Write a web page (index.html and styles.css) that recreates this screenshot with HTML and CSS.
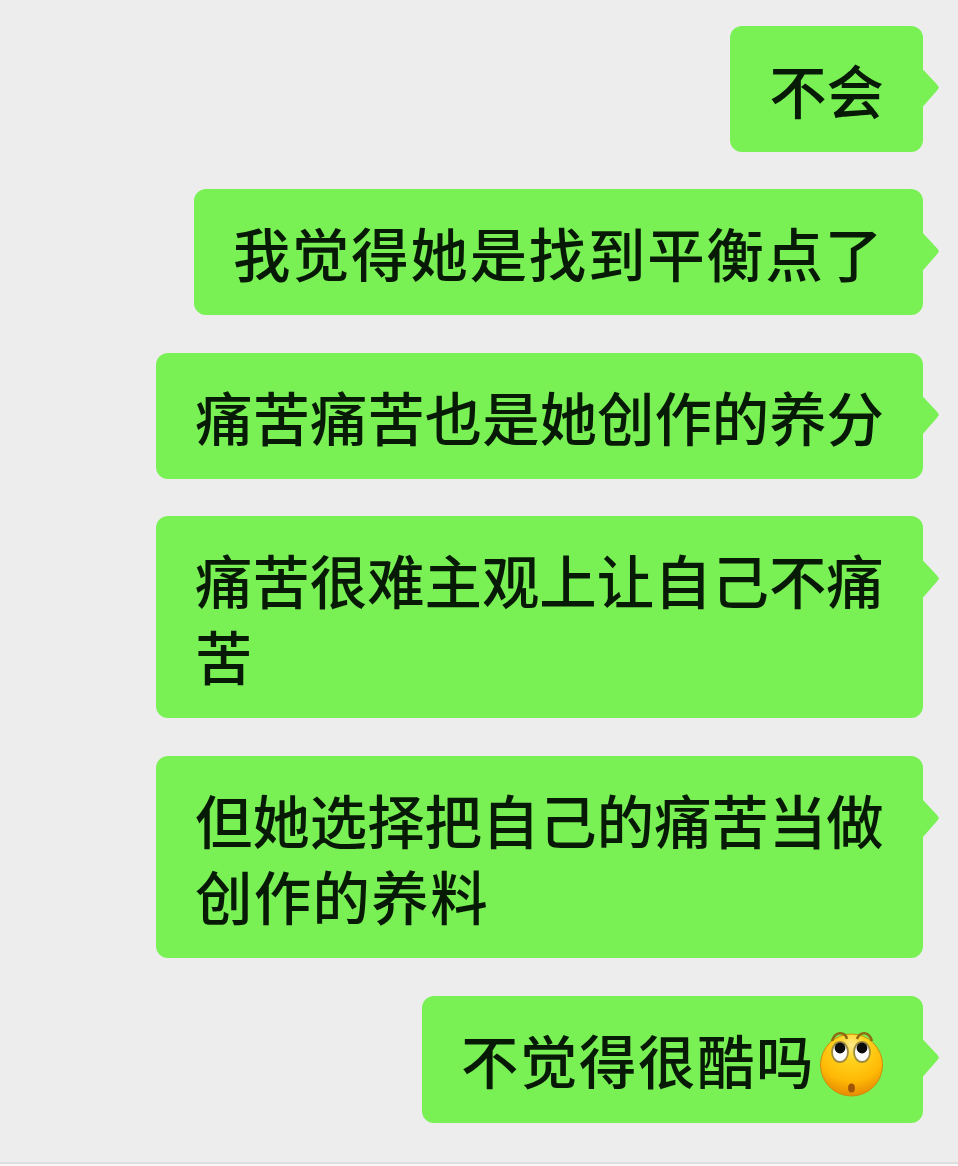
FILE: index.html
```html
<!DOCTYPE html>
<html lang="zh-CN">
<head>
    <meta charset="UTF-8">
    <title>聊天记录</title>
    <link rel="stylesheet" href="styles.css">
</head>
<body>
    <div class="chat">
        <div class="bubble">不会</div>
        <div class="bubble wide-text">我觉得她是找到平衡点了</div>
        <div class="bubble">痛苦痛苦也是她创作的养分</div>
        <div class="bubble">痛苦很难主观上让自己不痛苦</div>
        <div class="bubble">但她选择把自己的痛苦当做<span class="loose">创作的养料</span></div>
        <div class="bubble emoji-row">不觉得很酷吗<svg class="emoji" viewBox="0 0 64 68" aria-hidden="true">
            <defs>
                <radialGradient id="face" cx="50%" cy="18%" r="80%">
                    <stop offset="0" stop-color="#ffe98c"/>
                    <stop offset="0.28" stop-color="#ffd41e"/>
                    <stop offset="0.72" stop-color="#ffb905"/>
                    <stop offset="1" stop-color="#e88f04"/>
                </radialGradient>
            </defs>
            <circle cx="31.5" cy="35" r="31" fill="url(#face)" stroke="#d08c0c" stroke-width="1"/>
            <path d="M12 11 C15 1 25 1 27 9" fill="none" stroke="#8f6a12" stroke-width="2.6"/>
            <path d="M37 9 C40 1 49 1 52 11" fill="none" stroke="#8f6a12" stroke-width="2.6"/>
            <ellipse cx="20" cy="22" rx="8" ry="10" fill="#fff" stroke="#9c8a42" stroke-width="1.8"/>
            <ellipse cx="42" cy="22" rx="8" ry="10" fill="#fff" stroke="#9c8a42" stroke-width="1.8"/>
            <circle cx="20" cy="18" r="5.4" fill="#0c0c0c"/>
            <circle cx="42" cy="18" r="5.4" fill="#0c0c0c"/>
            <ellipse cx="31.5" cy="58" rx="3.4" ry="4.6" fill="#a05406"/>
        </svg></div>
    </div>
    <div class="bottom-bar"></div>
</body>
</html>
```

FILE: styles.css
```css
* {
    margin: 0;
    padding: 0;
    box-sizing: border-box;
}
body {
    background-color: #ededed;
    font-family: "Noto Sans CJK SC", sans-serif;
}
.chat {
    display: flex;
    flex-direction: column;
    align-items: flex-end;
    gap: 37.6px;
    height: 1162px;
    padding: 25.6px 35px 0 0;
}
.bubble {
    position: relative;
    max-width: 767px;
    padding: 25px 39px;
    border-radius: 12px;
    background-color: #79f155;
    color: #071a05;
    font-size: 57.4px;
    font-weight: 500;
    line-height: 76px;
}
.bubble::after {
    content: "";
    position: absolute;
    top: 44px;
    right: -16px;
    width: 16px;
    height: 37px;
    background-color: #79f155;
    clip-path: polygon(0 0, 14px 15px, 16px 18px, 14px 21px, 0 37px);
}
.wide-text {
    letter-spacing: 1.8px;
}
.loose {
    letter-spacing: 1.4px;
}
.emoji-row {
    padding-bottom: 26px;
    letter-spacing: 1.6px;
}
.emoji {
    width: 64px;
    height: 68px;
    margin: -6px 0 -2px 5px;
    vertical-align: -12px;
}
.bottom-bar {
    height: 4px;
    border-top: 2px solid #dedede;
    background-color: #f7f7f7;
}
```
